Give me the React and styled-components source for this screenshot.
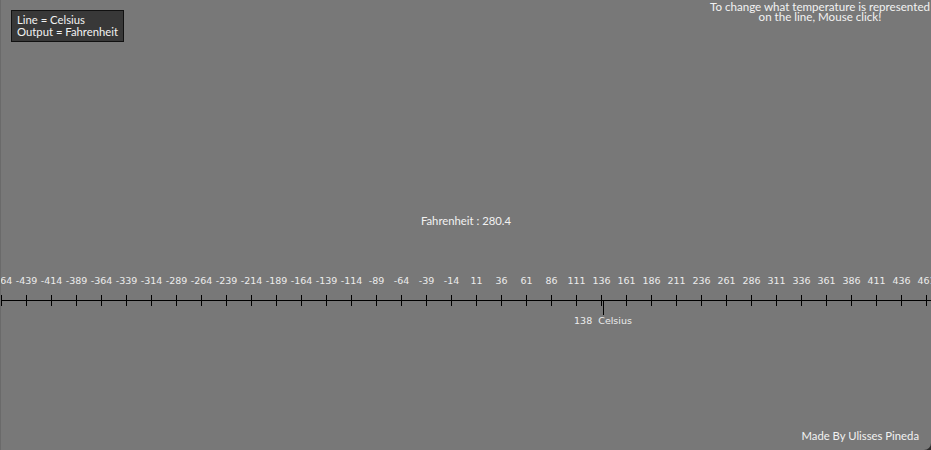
import React from 'react'
import styled, { createGlobalStyle } from 'styled-components'

const GlobalStyle = createGlobalStyle`
  html, body {
    margin: 0;
    padding: 0;
    background: #2b2b2b;
  }
`

const Stage = styled.div`
  width: 931px;
  height: 450px;
  display: flex;
  flex-direction: column;
  background: #787878;
  border-left: 1px solid #6a6a6a;
  box-sizing: border-box;
  border-bottom-right-radius: 7px;
  overflow: hidden;
  font-family: Lato, "Open Sans", sans-serif;
  color: #f2f2f2;
  cursor: default;
`

const Header = styled.div`
  display: flex;
  justify-content: space-between;
  align-items: flex-start;
  height: 41px;
`

const Legend = styled.div`
  margin: 10px 0 0 10px;
  padding: 3px 5px 3px 5px;
  background: #383838;
  border: 1px solid #111;
  font-size: 11.3px;
  line-height: 12px;
`

const Hint = styled.div`
  margin: 2px 1px 0 0;
  text-align: center;
  font-size: 11.6px;
  line-height: 10px;
`

const Readout = styled.div`
  margin-top: 173px;
  text-align: center;
  font-size: 11.3px;
  line-height: 14px;
  height: 14px;
`

const Ruler = styled.div`
  position: relative;
  margin-top: 42px;
  height: 60px;
`

const Axis = styled.div`
  position: absolute;
  left: -1px;
  right: 0;
  top: 30px;
  height: 1px;
  background: #000;
`

const Tick = styled.div`
  position: absolute;
  top: 25px;
  width: 1px;
  height: 11px;
  background: #000;
`

const TickLabel = styled.div`
  position: absolute;
  top: 5px;
  width: 40px;
  margin-left: -20px;
  text-align: center;
  font-family: "DejaVu Sans", Verdana, sans-serif;
  font-size: 9.5px;
  line-height: 12px;
  color: #ececec;
  white-space: nowrap;
`

const Marker = styled.div`
  position: absolute;
  top: 30px;
  width: 1px;
  height: 15px;
  background: #000;
`

const MarkerLabel = styled.div`
  position: absolute;
  top: 45px;
  width: 100px;
  margin-left: -50px;
  text-align: center;
  font-family: "DejaVu Sans", Verdana, sans-serif;
  font-size: 9.5px;
  line-height: 12px;
  color: #ececec;
  white-space: pre;
`

const Footer = styled.div`
  margin-top: auto;
  padding: 0 12px 7px 0;
  text-align: right;
  font-size: 11.3px;
  line-height: 14px;
`

const OFFSET = 464
const celsius = 138
const ticks = Array.from({ length: 38 }, (_, k) => -OFFSET + 25 * k)
const toX = (v) => v + OFFSET

export default function App() {
  const fahrenheit = (celsius * 9) / 5 + 32
  return (
    <>
      <GlobalStyle />
      <Stage>
        <Header>
          <Legend>
            Line = Celsius<br />Output = Fahrenheit
          </Legend>
          <Hint>
            To change what temperature is represented<br />on the line, Mouse click!
          </Hint>
        </Header>
        <Readout>Fahrenheit : {fahrenheit.toFixed(1)}</Readout>
        <Ruler>
          <Axis />
          {ticks.map((v) => (
            <React.Fragment key={v}>
              <Tick style={{ left: toX(v) }} />
              <TickLabel style={{ left: toX(v) + 0.5 }}>{v}</TickLabel>
            </React.Fragment>
          ))}
          <Marker style={{ left: toX(celsius) }} />
          <MarkerLabel style={{ left: toX(celsius) }}>{celsius}  Celsius</MarkerLabel>
        </Ruler>
        <Footer>Made By Ulisses Pineda</Footer>
      </Stage>
    </>
  )
}
